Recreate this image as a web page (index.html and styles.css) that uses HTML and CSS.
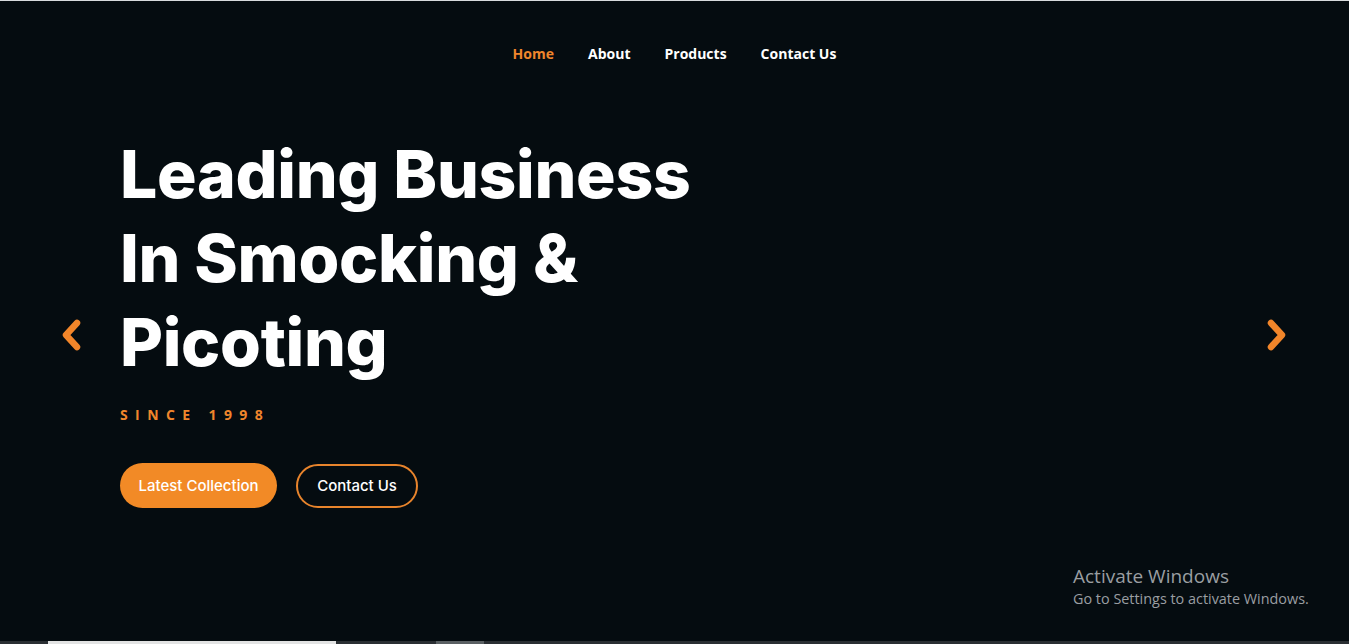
FILE: index.html
```html
<!DOCTYPE html>
<html lang="en">
<head>
<meta charset="utf-8">
<title>Leading Business</title>
<link rel="stylesheet" href="styles.css">
</head>
<body>
<div class="page">
  <header class="header">
    <nav class="nav">
      <a class="nav-link active" href="#">Home</a>
      <a class="nav-link" href="#">About</a>
      <a class="nav-link" href="#">Products</a>
      <a class="nav-link" href="#">Contact Us</a>
    </nav>
  </header>
  <main class="hero">
    <button class="arrow arrow-left" aria-label="Previous">
      <svg width="24" height="34" viewBox="0 0 24 34"><path d="M18 5 L7 17 L18 29" fill="none" stroke="#f2862a" stroke-width="6.5" stroke-linecap="round" stroke-linejoin="round"/></svg>
    </button>
    <div class="hero-content">
      <h1 class="title">Leading Business<br>In Smocking &amp;<br>Picoting</h1>
      <p class="since">SINCE 1998</p>
      <div class="actions">
        <a class="btn btn-fill" href="#">Latest Collection</a>
        <a class="btn btn-outline" href="#">Contact Us</a>
      </div>
    </div>
    <button class="arrow arrow-right" aria-label="Next">
      <svg width="24" height="34" viewBox="0 0 24 34"><path d="M6 5 L17 17 L6 29" fill="none" stroke="#f2862a" stroke-width="6.5" stroke-linecap="round" stroke-linejoin="round"/></svg>
    </button>
    <div class="watermark">
      <div class="wm-title">Activate Windows</div>
      <div class="wm-sub">Go to Settings to activate Windows.</div>
    </div>
  </main>
  <div class="scrollbar"><span class="thumb"></span><span class="thumb2"></span></div>
</div>
</body>
</html>
```
FILE: styles.css
```css
* { box-sizing: border-box; }
html, body { margin: 0; padding: 0; }
body {
  background: #050c10;
  height: 644px;
  overflow: hidden;
  font-family: "Open Sans", sans-serif;
}
.page {
  height: 644px;
  border-top: 1px solid #d8dbdd;
  display: flex;
  flex-direction: column;
}
.header {
  height: 105px;
  display: flex;
  justify-content: center;
  padding-top: 42px;
}
.nav {
  display: flex;
  gap: 34px;
  height: 22px;
}
.nav-link {
  color: #ffffff;
  text-decoration: none;
  font-weight: 700;
  font-size: 14px;
  line-height: 22px;
}
.nav-link.active { color: #f0862c; }
.hero {
  position: relative;
  flex: 1;
  padding-left: 120px;
  padding-top: 26px;
}
.hero-content {
  display: flex;
  flex-direction: column;
}
.title {
  margin: 0;
  color: #ffffff;
  font-family: "Inter", sans-serif;
  font-weight: 800;
  font-size: 66px;
  line-height: 84px;
  letter-spacing: -0.3px;
}
.since {
  margin: 21px 0 0;
  color: #f0862c;
  font-weight: 700;
  font-size: 14px;
  letter-spacing: 7.4px;
  line-height: 20px;
}
.actions {
  display: flex;
  gap: 19px;
  margin-top: 38px;
  align-items: center;
}
.btn {
  display: inline-flex;
  align-items: center;
  justify-content: center;
  border-radius: 23px;
  text-decoration: none;
  color: #ffffff;
  font-family: "Inter", sans-serif;
  font-weight: 500;
  font-size: 15px;
}
.btn-fill {
  background: #f28a26;
  width: 157px;
  height: 45px;
}
.btn-outline {
  border: 2px solid #e8842c;
  width: 122px;
  height: 44px;
}
.arrow {
  position: absolute;
  top: 212px;
  background: none;
  border: 0;
  padding: 0;
  width: 24px;
  height: 34px;
  cursor: pointer;
}
.arrow-left { left: 59px; }
.arrow-right { right: 60px; }
.watermark {
  position: absolute;
  left: 1073px;
  top: 458px;
  color: #9a9ea2;
  font-family: "Open Sans", sans-serif;
}
.wm-title { font-size: 19px; line-height: 24px; }
.wm-sub { font-size: 14.4px; line-height: 21px; }
.scrollbar {
  height: 3px;
  background: #2a2f33;
  display: flex;
}
.thumb {
  margin-left: 48px;
  width: 288px;
  background: #e2e3e3;
}
.thumb2 {
  margin-left: 100px;
  width: 48px;
  background: #5a6063;
}
```
